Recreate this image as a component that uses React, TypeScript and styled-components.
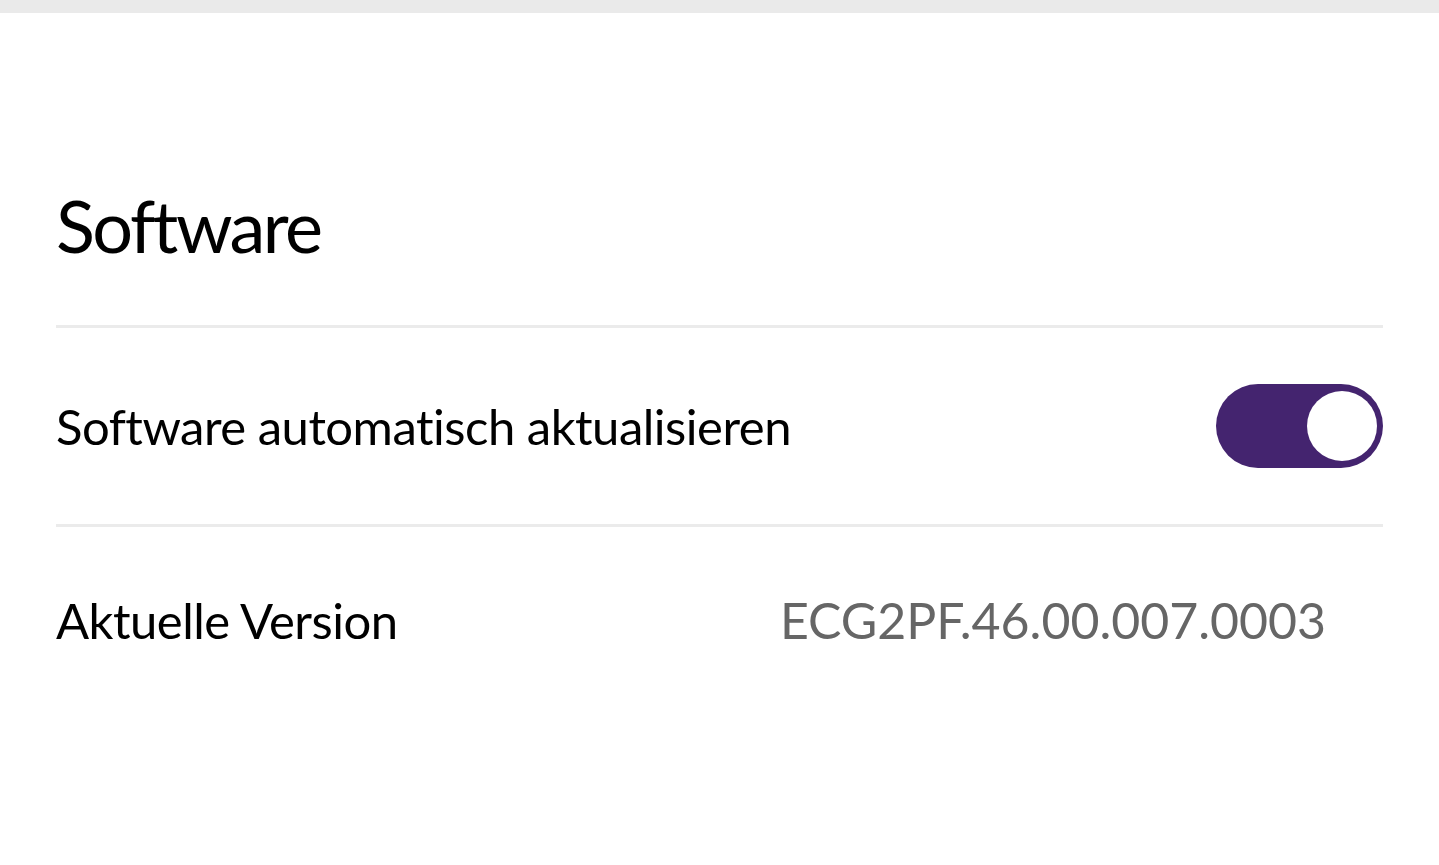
import React from "react";
import styled, { createGlobalStyle } from "styled-components";

const Global = createGlobalStyle`
  html, body { margin: 0; padding: 0; background: #ffffff; }
  body { font-family: "Lato", "Liberation Sans", sans-serif; color: #000; }
`;

const Page = styled.div`
  width: 1439px;
  height: 865px;
  display: flex;
  flex-direction: column;
  background: #ffffff;
  overflow: hidden;
`;

const TopBar = styled.div`
  height: 13px;
  background: #eaeaea;
  flex-shrink: 0;
`;

const Content = styled.div`
  display: flex;
  flex-direction: column;
  padding: 0 56px 0 56px;
`;

const Title = styled.h1`
  margin: 0;
  font-weight: 400;
  font-size: 72px;
  line-height: 72px;
  padding-top: 176px;
  padding-bottom: 64px;
  letter-spacing: -2.5px;
`;

const Divider = styled.div`
  height: 3px;
  background: #ebebeb;
`;

const Row = styled.div<{ $h: number; $padRight?: number }>`
  height: ${(p) => p.$h}px;
  display: flex;
  align-items: center;
  justify-content: space-between;
  padding-right: ${(p) => p.$padRight ?? 0}px;
`;

const Label = styled.span`
  font-size: 49px;
  font-weight: 400;
  letter-spacing: -0.5px;
`;

const Value = styled.span`
  font-size: 50px;
  color: #666666;
  letter-spacing: 0;
`;

const Toggle = styled.div<{ $on: boolean }>`
  width: 167px;
  height: 84px;
  border-radius: 42px;
  background: ${(p) => (p.$on ? "#44246f" : "#cccccc")};
  display: flex;
  align-items: center;
  justify-content: ${(p) => (p.$on ? "flex-end" : "flex-start")};
  padding: 0 6px;
  box-sizing: border-box;
`;

const Knob = styled.div`
  width: 70px;
  height: 70px;
  border-radius: 50%;
  background: #ffffff;
`;

export default function App() {
  return (
    <Page>
      <Global />
      <TopBar />
      <Content>
        <Title>Software</Title>
        <Divider />
        <Row $h={196}>
          <Label>Software automatisch aktualisieren</Label>
          <Toggle $on>
            <Knob />
          </Toggle>
        </Row>
        <Divider />
        <Row $h={186} $padRight={57}>
          <Label>Aktuelle Version</Label>
          <Value>ECG2PF.46.00.007.0003</Value>
        </Row>
      </Content>
    </Page>
  );
}
